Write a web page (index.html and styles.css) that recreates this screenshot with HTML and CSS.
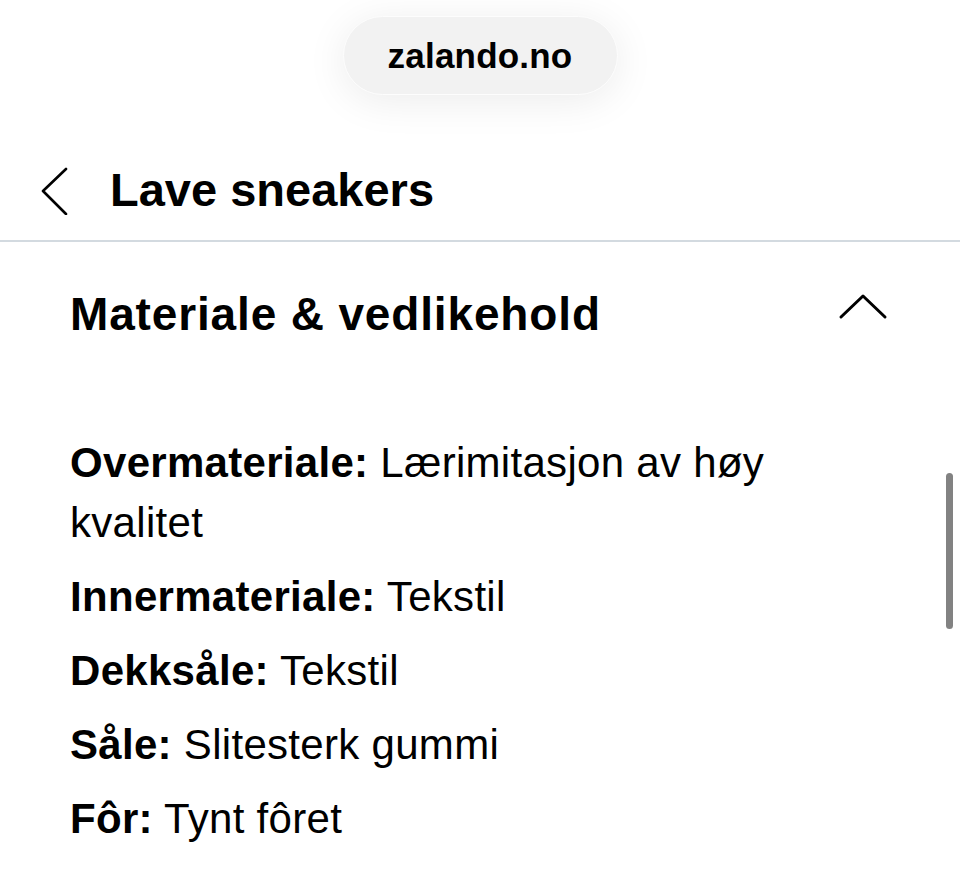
FILE: index.html
```html
<!DOCTYPE html>
<html lang="no">
<head>
<meta charset="utf-8">
<title>Lave sneakers</title>
<link rel="stylesheet" href="styles.css">
</head>
<body>
<div class="topbar">
  <div class="url-pill">zalando.no</div>
</div>
<header class="header">
  <svg class="back" width="30" height="50" viewBox="0 0 30 50" aria-hidden="true">
    <polyline points="25,4 2,26 25,49" fill="none" stroke="#000" stroke-width="2.6" stroke-linecap="round" stroke-linejoin="round"/>
  </svg>
  <h1 class="title">Lave sneakers</h1>
</header>
<main class="section">
  <div class="section-head">
    <h2 class="section-title">Materiale &amp; vedlikehold</h2>
    <svg class="toggle" width="50" height="56" viewBox="0 0 50 56" aria-hidden="true">
      <polyline points="3,31 25,10 47,31" fill="none" stroke="#000" stroke-width="3" stroke-linecap="round" stroke-linejoin="round"/>
    </svg>
  </div>
  <ul class="props">
    <li><b>Overmateriale:</b> Lærimitasjon av høy kvalitet</li>
    <li><b>Innermateriale:</b> Tekstil</li>
    <li><b>Dekksåle:</b> Tekstil</li>
    <li><b>Såle:</b> Slitesterk gummi</li>
    <li><b>Fôr:</b> Tynt fôret</li>
  </ul>
</main>
<div class="scrollbar"></div>
</body>
</html>
```
FILE: styles.css
```css
html, body {
  margin: 0;
  padding: 0;
  background: #fff;
  color: #000;
  font-family: "Liberation Sans", Arial, sans-serif;
  overflow: hidden;
}

.topbar {
  height: 140px;
  display: flex;
  justify-content: center;
  align-items: flex-start;
  background: #fff;
}

.url-pill {
  margin-top: 16px;
  width: 273px;
  height: 77px;
  box-sizing: content-box;
  border: 1px solid #fdfdfd;
  border-radius: 40px;
  background: #f2f2f2;
  box-shadow: 0 6px 40px rgba(0, 0, 0, 0.08);
  display: flex;
  align-items: center;
  justify-content: center;
  font-size: 35px;
  font-weight: 700;
  letter-spacing: 0.2px;
}

.header {
  height: 100px;
  display: flex;
  align-items: center;
  padding-left: 41px;
  border-bottom: 2px solid #d3dae0;
}

.back {
  display: block;
}

.title {
  margin: 0 0 0 39px;
  font-size: 47px;
  line-height: 56px;
  font-weight: 700;
}

.section {
  padding: 44px 72px 0 70px;
}

.section-head {
  display: flex;
  justify-content: space-between;
  align-items: flex-start;
}

.section-title {
  margin: 0;
  font-size: 46px;
  line-height: 56px;
  font-weight: 700;
  letter-spacing: 0.85px;
}

.toggle {
  display: block;
}

.props {
  list-style: none;
  margin: 91px 0 0 0;
  padding: 0;
  max-width: 760px;
  display: flex;
  flex-direction: column;
  gap: 14px;
}

.props li {
  font-size: 42px;
  line-height: 60px;
  letter-spacing: 0.3px;
}

.props b {
  font-weight: 700;
}

.scrollbar {
  position: absolute;
  left: 946px;
  top: 473px;
  width: 7px;
  height: 156px;
  border-radius: 4px;
  background: #828282;
}
```
